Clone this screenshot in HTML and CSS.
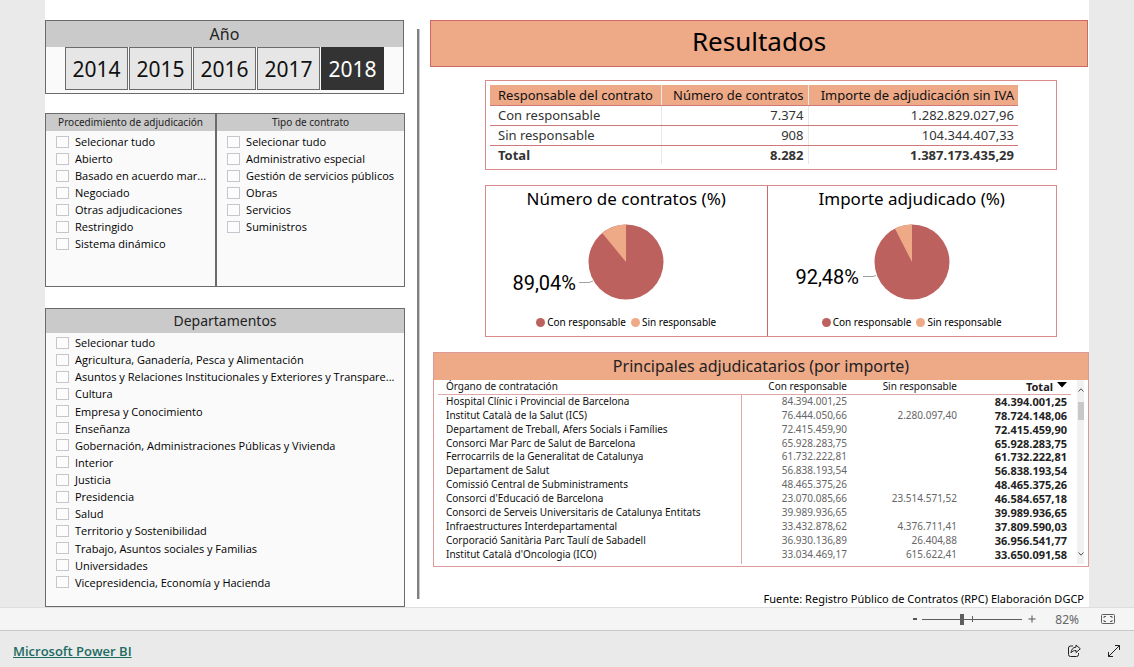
FILE: index.html
```html
<!DOCTYPE html>
<html lang="es">
<head>
<meta charset="utf-8">
<title>Microsoft Power BI</title>
<meta name="viewport" content="width=device-width, initial-scale=1">
<link rel="stylesheet" href="styles.css">
</head>
<body>
<main class="report">
  <section class="filters">
    <section class="card year-card">
      <h2 class="card-title year-title">Año</h2>
      <div class="years">
        <button class="year" type="button">2014</button>
        <button class="year" type="button">2015</button>
        <button class="year" type="button">2016</button>
        <button class="year" type="button">2017</button>
        <button class="year year-active" type="button" aria-pressed="true">2018</button>
      </div>
    </section>

    <div class="filter-row">
      <section class="card procedure-card">
        <h2 class="card-title small-title">Procedimiento de adjudicación</h2>
        <div class="options">
          <label class="option"><input class="box" type="checkbox"><span class="name">Selecionar tudo</span></label>
          <label class="option"><input class="box" type="checkbox"><span class="name">Abierto</span></label>
          <label class="option"><input class="box" type="checkbox"><span class="name">Basado en acuerdo mar...</span></label>
          <label class="option"><input class="box" type="checkbox"><span class="name">Negociado</span></label>
          <label class="option"><input class="box" type="checkbox"><span class="name">Otras adjudicaciones</span></label>
          <label class="option"><input class="box" type="checkbox"><span class="name">Restringido</span></label>
          <label class="option"><input class="box" type="checkbox"><span class="name">Sistema dinámico</span></label>
        </div>
      </section>
      <section class="card type-card">
        <h2 class="card-title small-title">Tipo de contrato</h2>
        <div class="options">
          <label class="option"><input class="box" type="checkbox"><span class="name">Selecionar tudo</span></label>
          <label class="option"><input class="box" type="checkbox"><span class="name">Administrativo especial</span></label>
          <label class="option"><input class="box" type="checkbox"><span class="name">Gestión de servicios públicos</span></label>
          <label class="option"><input class="box" type="checkbox"><span class="name">Obras</span></label>
          <label class="option"><input class="box" type="checkbox"><span class="name">Servicios</span></label>
          <label class="option"><input class="box" type="checkbox"><span class="name">Suministros</span></label>
        </div>
      </section>
    </div>

    <section class="card department-card">
      <h2 class="card-title department-title">Departamentos</h2>
      <div class="options department-options">
        <label class="option"><input class="box" type="checkbox"><span class="name">Selecionar tudo</span></label>
        <label class="option"><input class="box" type="checkbox"><span class="name">Agricultura, Ganadería, Pesca y Alimentación</span></label>
        <label class="option"><input class="box" type="checkbox"><span class="name">Asuntos y Relaciones Institucionales y Exteriores y Transpare...</span></label>
        <label class="option"><input class="box" type="checkbox"><span class="name">Cultura</span></label>
        <label class="option"><input class="box" type="checkbox"><span class="name">Empresa y Conocimiento</span></label>
        <label class="option"><input class="box" type="checkbox"><span class="name">Enseñanza</span></label>
        <label class="option"><input class="box" type="checkbox"><span class="name">Gobernación, Administraciones Públicas y Vivienda</span></label>
        <label class="option"><input class="box" type="checkbox"><span class="name">Interior</span></label>
        <label class="option"><input class="box" type="checkbox"><span class="name">Justicia</span></label>
        <label class="option"><input class="box" type="checkbox"><span class="name">Presidencia</span></label>
        <label class="option"><input class="box" type="checkbox"><span class="name">Salud</span></label>
        <label class="option"><input class="box" type="checkbox"><span class="name">Territorio y Sostenibilidad</span></label>
        <label class="option"><input class="box" type="checkbox"><span class="name">Trabajo, Asuntos sociales y Familias</span></label>
        <label class="option"><input class="box" type="checkbox"><span class="name">Universidades</span></label>
        <label class="option"><input class="box" type="checkbox"><span class="name">Vicepresidencia, Economía y Hacienda</span></label>
      </div>
    </section>
  </section>

  <div class="divider"></div>

  <section class="results">
    <h1 class="banner">Resultados</h1>

    <div class="summary">
      <table class="summary-table">
        <thead>
          <tr><th class="col-name">Responsable del contrato</th><th class="col-count">Número de contratos</th><th>Importe de adjudicación sin IVA</th></tr>
        </thead>
        <tbody>
          <tr><td>Con responsable</td><td>7.374</td><td>1.282.829.027,96</td></tr>
          <tr><td>Sin responsable</td><td>908</td><td>104.344.407,33</td></tr>
          <tr class="summary-total"><td>Total</td><td>8.282</td><td>1.387.173.435,29</td></tr>
        </tbody>
      </table>
    </div>

    <div class="charts">
      <section class="chart chart-count">
        <h2 class="chart-title">Número de contratos (%)</h2>
        <svg class="pie" viewBox="-140 -45 280 90" role="img" aria-label="Con responsable 89,04%">
          <circle class="slice-with" r="37.5"/>
          <path class="slice-without" d="M0 0L-23.8 -28.9A37.5 37.5 0 0 1 0 -37.5Z"/>
          <path class="leader" d="M-47 20.500H-37L-33 19"/>
          <text class="percent" x="-50" y="28">89,04%</text>
        </svg>
        <div class="legend"><span class="dot dot-with"></span>Con responsable<span class="dot dot-without"></span>Sin responsable</div>
      </section>
      <section class="chart chart-amount">
        <h2 class="chart-title">Importe adjudicado (%)</h2>
        <svg class="pie" viewBox="-140 -45 280 90" role="img" aria-label="Con responsable 92,48%">
          <circle class="slice-with" r="37.5"/>
          <path class="slice-without" d="M0 0L-17.100 -33.400A37.5 37.5 0 0 1 0 -37.5Z"/>
          <path class="leader" d="M-49 14.500H-39L-36 13.500"/>
          <text class="percent" x="-53" y="22">92,48%</text>
        </svg>
        <div class="legend"><span class="dot dot-with"></span>Con responsable<span class="dot dot-without"></span>Sin responsable</div>
      </section>
    </div>

    <section class="awards">
      <h2 class="awards-title">Principales adjudicatarios (por importe)</h2>
      <div class="awards-body">
        <div class="awards-view">
          <table class="awards-table">
            <thead>
              <tr><th class="col-body">Órgano de contratación</th><th>Con responsable</th><th>Sin responsable</th><th class="col-total">Total<svg class="sort" viewBox="0 0 10 6" aria-hidden="true"><path d="M0 0H10L5 5.500Z"/></svg></th></tr>
            </thead>
            <tbody>
              <tr><td>Hospital Clínic i Provincial de Barcelona</td><td>84.394.001,25</td><td></td><td>84.394.001,25</td></tr>
              <tr><td>Institut Català de la Salut (ICS)</td><td>76.444.050,66</td><td>2.280.097,40</td><td>78.724.148,06</td></tr>
              <tr><td>Departament de Treball, Afers Socials i Famílies</td><td>72.415.459,90</td><td></td><td>72.415.459,90</td></tr>
              <tr><td>Consorci Mar Parc de Salut de Barcelona</td><td>65.928.283,75</td><td></td><td>65.928.283,75</td></tr>
              <tr><td>Ferrocarrils de la Generalitat de Catalunya</td><td>61.732.222,81</td><td></td><td>61.732.222,81</td></tr>
              <tr><td>Departament de Salut</td><td>56.838.193,54</td><td></td><td>56.838.193,54</td></tr>
              <tr><td>Comissió Central de Subministraments</td><td>48.465.375,26</td><td></td><td>48.465.375,26</td></tr>
              <tr><td>Consorci d'Educació de Barcelona</td><td>23.070.085,66</td><td>23.514.571,52</td><td>46.584.657,18</td></tr>
              <tr><td>Consorci de Serveis Universitaris de Catalunya Entitats</td><td>39.989.936,65</td><td></td><td>39.989.936,65</td></tr>
              <tr><td>Infraestructures Interdepartamental</td><td>33.432.878,62</td><td>4.376.711,41</td><td>37.809.590,03</td></tr>
              <tr><td>Corporació Sanitària Parc Taulí de Sabadell</td><td>36.930.136,89</td><td>26.404,88</td><td>36.956.541,77</td></tr>
              <tr><td>Institut Català d'Oncologia (ICO)</td><td>33.034.469,17</td><td>615.622,41</td><td>33.650.091,58</td></tr>
              <tr><td>&nbsp;</td><td></td><td></td><td></td></tr>
            </tbody>
          </table>
        </div>
        <div class="scrollbar" aria-hidden="true">
          <svg class="arrow" viewBox="0 0 6 4"><path d="M.5 3.500L3 .8L5.500 3.500"/></svg>
          <span class="grip"></span>
          <svg class="arrow arrow-down" viewBox="0 0 6 4"><path d="M.5 .5L3 3.200L5.500 .5"/></svg>
        </div>
      </div>
    </section>

    <p class="source">Fuente: Registro Público de Contratos (RPC) Elaboración DGCP</p>
  </section>
</main>

<div class="zoom-bar">
  <button class="step" type="button" aria-label="Alejar"><svg class="sign" viewBox="0 0 8 8"><path d="M2 4H6"/></svg></button>
  <div class="slider-wrap"><input class="slider" type="range" min="0" max="100" value="39" aria-label="Zoom"></div>
  <button class="step" type="button" aria-label="Acercar"><svg class="sign sign-plus" viewBox="0 0 8 8"><path d="M.5 4H7.500M4 .5V7.500"/></svg></button>
  <span class="zoom-value">82%</span>
  <button class="fit" type="button" aria-label="Ajustar a la página"><svg class="fit-icon" viewBox="0 0 14 10"><rect x=".5" y=".5" width="13" height="9" rx="1"/><path d="M5 2.500H3V4M9 2.500H11V4M5 7.500H3V6M9 7.500H11V6"/></svg></button>
</div>

<footer class="footer">
  <a class="brand" href="#">Microsoft Power BI</a>
  <div class="actions">
    <button class="action" type="button" aria-label="Compartir"><svg class="action-icon" viewBox="0 0 14 14"><path d="M6 2H3.500A2 2 0 0 0 1.500 4V10.500A2 2 0 0 0 3.500 12.500H9.500A2 2 0 0 0 11.500 10.500V9"/><path d="M9 1L13.300 4.800L9 8.600V6.500C6.800 6.400 5.300 7.200 4 8.800C4.300 5.500 6 3.300 9 3.100Z"/></svg></button>
    <button class="action" type="button" aria-label="Pantalla completa"><svg class="action-icon" viewBox="0 0 14 14"><path d="M1.500 12.500L12.500 1.500M8 1.500H12.500V6M1.500 8V12.500H6"/></svg></button>
  </div>
</footer>
</body>
</html>
```
FILE: styles.css
```css
* {
  box-sizing: border-box;
}

body {
  margin: 0;
  min-height: 100vh;
  display: flex;
  flex-direction: column;
  background: #eaeaea;
  color: #000;
  font-family: "Noto Sans", "Open Sans", sans-serif;
  font-size: 12px;
}

h1,
h2,
p {
  margin: 0;
  font-weight: 400;
}

button {
  padding: 0;
  font: inherit;
  cursor: pointer;
}

/* Report page */
.report {
  flex: 1;
  display: flex;
  margin: 0 45px;
  padding: 20px 0 0;
  background: #fff;
}

.filters {
  flex: 360 1 0;
  min-width: 0;
  display: flex;
  flex-direction: column;
}

.divider {
  width: 3px;
  margin: 9px 10px 8px 12px;
  background: #808080;
  border-right: 1px solid #c8c8c8;
}

.results {
  flex: 659 1 0;
  min-width: 0;
}

/* Filter cards */
.card {
  display: flex;
  flex-direction: column;
  border: 1px solid #6b6b6b;
  background: #fafafa;
}

.card-title {
  background: #cacaca;
  color: #222;
  text-align: center;
}

.year-card {
  height: 74px;
  margin: 0 1px 19px 0;
}

.year-title {
  font-size: 16px;
  line-height: 26px;
}

.years {
  display: flex;
  justify-content: center;
  gap: 1px;
}

.year {
  width: 63px;
  height: 43px;
  border: 1px solid #6b6b6b;
  background: #e6e6e6;
  color: #111;
  font-size: 21px;
}

.year-active {
  border-color: #333;
  background: #333;
  color: #fff;
}

.filter-row {
  display: flex;
  height: 174px;
  margin-bottom: 21px;
}

.procedure-card {
  flex: 171 1 0;
  min-width: 0;
}

.type-card {
  flex: 189 1 0;
  min-width: 0;
}

.small-title {
  font-size: 10px;
  line-height: 17px;
}

.options {
  padding: 2px 0 0 10px;
  font-family: "Open Sans", "Noto Sans", sans-serif;
  font-size: 11px;
}

.option {
  height: 17px;
  display: flex;
  align-items: center;
  gap: 6px;
}

.name {
  line-height: 17px;
  white-space: nowrap;
}

.box {
  appearance: none;
  flex: none;
  width: 13px;
  height: 12px;
  margin: 0;
  border: 1px solid #c6c6cc;
  background: #fcfcfc;
}

.box:checked {
  background: #333;
}

.department-card {
  flex: 1;
}

.department-title {
  font-size: 14px;
  line-height: 24px;
}

.department-options {
  flex: 1;
  display: grid;
  grid-auto-rows: 1fr;
  padding: 1px 0 15px 10px;
}

/* Results column */
.banner {
  height: 47px;
  margin-right: 1px;
  border: 1px solid #cd6866;
  background: #eea987;
  font-size: 26px;
  line-height: 41px;
  text-align: center;
}

.summary {
  height: 90px;
  margin: 13px 32px 15px 55px;
  padding: 4px 38px 0 4px;
  border: 1px solid #d98b8b;
}

.summary-table {
  width: 100%;
  border-collapse: collapse;
  table-layout: fixed;
  color: #333;
  font-size: 13px;
  line-height: 18px;
}

.summary-table th,
.summary-table td {
  height: 20px;
  padding: 0 4px 0 8px;
  border-right: 1px solid #e8e8e8;
  border-bottom: 1px solid #d07878;
  text-align: right;
  font-weight: 400;
  white-space: nowrap;
}

.summary-table th {
  background: #eea987;
  color: #111;
}

.summary-table th:first-child,
.summary-table td:first-child {
  text-align: left;
}

.summary-table th:last-child,
.summary-table td:last-child {
  border-right: 0;
}

.summary-table .summary-total td {
  height: 18px;
  border-bottom: 0;
  font-weight: 700;
}

.summary-table .col-name {
  width: 171px;
}

.summary-table .col-count {
  width: 147px;
}

.charts {
  display: flex;
  height: 152px;
  margin: 0 32px 15px 55px;
  border: 1px solid #d98b8b;
}

.chart {
  min-width: 0;
  display: flex;
  flex-direction: column;
  align-items: center;
}

.chart-count {
  flex: 281 1 0;
  border-right: 1px solid #cd6866;
}

.chart-amount {
  flex: 289 1 0;
}

.chart-title {
  font-size: 17px;
  line-height: 26px;
}

.pie {
  width: 280px;
  height: 90px;
  margin-top: 5px;
}

.slice-with {
  fill: #bd615f;
}

.slice-without {
  fill: #eea987;
}

.leader {
  fill: none;
  stroke: #a0a0a0;
}

.percent {
  font-family: Roboto, sans-serif;
  font-size: 20px;
  text-anchor: end;
}

.legend {
  display: flex;
  align-items: center;
  font-size: 10px;
  line-height: 16px;
  margin-top: 7px;
}

.dot {
  width: 9px;
  height: 9px;
  margin-right: 2px;
  border-radius: 50%;
}

.dot-with {
  background: #bd615f;
}

.dot-without {
  margin-left: 5px;
  background: #eea987;
}

/* Main contractors */
.awards {
  margin-left: 3px;
  border: 1px solid #dd9a9a;
}

.awards-title {
  background: #eea987;
  color: #222;
  font-size: 16px;
  line-height: 27px;
  text-align: center;
}

.awards-body {
  display: flex;
  height: 186px;
  padding: 0 4px 2px;
}

.awards-view {
  flex: 1;
  height: 184px;
  overflow: hidden;
}

.awards-table {
  width: 100%;
  height: 195px;
  border-collapse: collapse;
  table-layout: fixed;
  color: #111;
  font-size: 10px;
  line-height: 13px;
}

.awards-table th,
.awards-table td {
  width: 110px;
  padding: 0 4px;
  text-align: right;
  font-weight: 400;
  white-space: nowrap;
}

.awards-table th {
  height: 14px;
  border-bottom: 1px solid #dfa9a9;
}

.awards-table td {
  color: #666;
}

.awards-table .col-body,
.awards-table td:first-child {
  width: auto;
  padding-left: 8px;
  color: #111;
  text-align: left;
}

.awards-table td:first-child {
  border-right: 1px solid #dfa9a9;
}

.awards-table .col-total,
.awards-table td:last-child {
  color: #222;
  font-size: 11px;
  font-weight: 700;
}

.sort {
  width: 10px;
  height: 6px;
  margin-left: 4px;
  vertical-align: 3px;
}

.scrollbar {
  width: 7px;
  margin-left: 6px;
  display: flex;
  flex-direction: column;
  align-items: center;
  padding: 8px 0;
  background: #f1f1f1;
}

.arrow {
  width: 6px;
  height: 4px;
  fill: none;
  stroke: #505050;
}

.arrow-down {
  margin-top: auto;
}

.grip {
  width: 6px;
  height: 18px;
  margin-top: 10px;
  background: #c8c8c8;
}

.source {
  margin: 23px 5px 0 0;
  font-size: 11px;
  line-height: 17px;
  text-align: right;
}

/* Zoom bar */
.zoom-bar {
  display: flex;
  justify-content: flex-end;
  align-items: center;
  height: 23px;
  padding-right: 19px;
  border-top: 1px solid #dedede;
  background: #f5f5f5;
  color: #666;
}

.step,
.fit,
.action {
  display: flex;
  border: 0;
  background: none;
}

.sign {
  width: 8px;
  height: 8px;
  fill: none;
  stroke: #555;
  stroke-width: 2;
}

.sign-plus {
  stroke-width: 1;
}

.slider-wrap {
  display: flex;
  margin: 0 6px 0 3px;
  background: linear-gradient(#605e5c, #605e5c) 50% 50% / 1px 6px no-repeat;
}

.slider {
  appearance: none;
  width: 100px;
  height: 12px;
  margin: 0;
  background: linear-gradient(#605e5c, #605e5c) 0 50% / 100% 1px no-repeat;
}

.slider::-webkit-slider-thumb {
  appearance: none;
  width: 4px;
  height: 11px;
  background: #605e5c;
}

.zoom-value {
  margin: 0 22px 0 19px;
}

.fit-icon {
  width: 14px;
  height: 10px;
  fill: none;
  stroke: #605e5c;
}

/* Footer */
.footer {
  display: flex;
  justify-content: space-between;
  align-items: center;
  height: 37px;
  padding: 3px 13px 0;
  border-top: 1px solid #c8c8c8;
}

.brand {
  color: #1a6b62;
  font-family: "Open Sans", "Noto Sans", sans-serif;
  font-size: 13px;
  font-weight: 600;
  text-decoration: underline;
}

.actions {
  display: flex;
  gap: 26px;
}

.action-icon {
  width: 14px;
  height: 14px;
  fill: none;
  stroke: #222;
}
```
